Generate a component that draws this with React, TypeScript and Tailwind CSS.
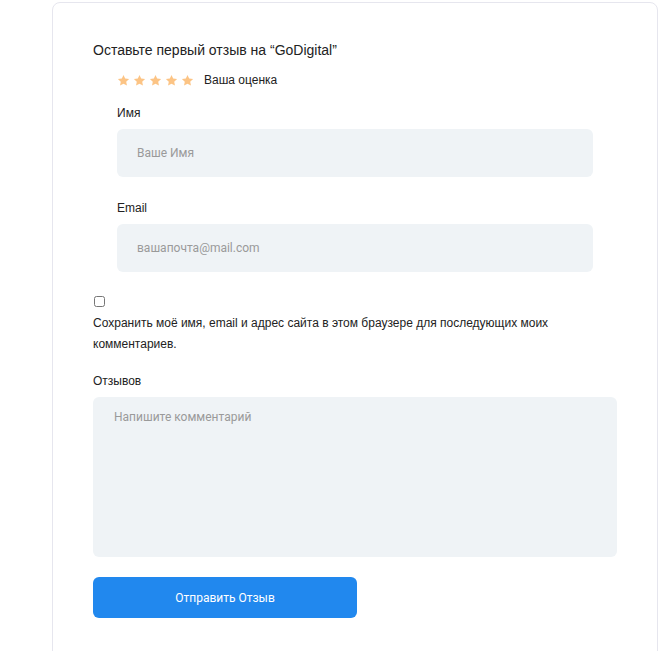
import React from 'react';

const Star: React.FC = () => (
    <svg viewBox="0 0 24 24" className="w-[13px] h-[13px]" fill="#fcc485">
        <path d="M12 1.8l3.1 6.6 7.2.9-5.3 5 1.4 7.1L12 17.9l-6.4 3.5 1.4-7.1-5.3-5 7.2-.9z" />
    </svg>
);

const App: React.FC = () => {
    return (
        <div className="min-h-screen bg-white font-['Liberation_Sans',Arial,sans-serif] text-[#222]">
            <div className="ml-[52px] mt-[2px] w-[606px] h-[660px] border border-[#e6e6ee] rounded-lg bg-white pl-[40px] pt-[37px]">
                <h3 className="text-[14px] leading-[20px] text-[#222]">Оставьте первый отзыв на “GoDigital”</h3>

                <div className="pl-[24px]">
                    {/* rating */}
                    <div className="flex items-center mt-[10px] h-[20px]">
                        <div className="flex gap-[3px]">
                            <Star />
                            <Star />
                            <Star />
                            <Star />
                            <Star />
                        </div>
                        <span className="ml-[10px] text-[12px] text-[#222]">Ваша оценка</span>
                    </div>

                    <label className="block mt-[15px] text-[12px] leading-[16px]">Имя</label>
                    <input
                        type="text"
                        placeholder="Ваше Имя"
                        className="mt-[8px] block w-[476px] h-[48px] rounded-md bg-[#eff3f6] px-[20px] text-[12px] font-['Roboto',sans-serif] placeholder:text-[#9a9a9a] focus:outline-none"
                    />

                    <label className="block mt-[23px] text-[12px] leading-[16px]">Email</label>
                    <input
                        type="text"
                        placeholder="вашапочта@mail.com"
                        className="mt-[8px] block w-[476px] h-[48px] rounded-md bg-[#eff3f6] px-[20px] text-[12px] font-['Roboto',sans-serif] placeholder:text-[#9a9a9a] focus:outline-none"
                    />
                </div>

                <input type="checkbox" className="block mt-[24px] ml-[1px] w-[11px] h-[11px]" />
                <p className="mt-[6px] w-[500px] text-[12px] leading-[21px] text-[#222]">
                    Сохранить моё имя, email и адрес сайта в этом браузере для последующих моих комментариев.
                </p>

                <label className="block mt-[18px] text-[12px] leading-[16px]">Отзывов</label>
                <textarea
                    placeholder="Напишите комментарий"
                    className="mt-[8px] block w-[524px] h-[160px] resize-none rounded-md bg-[#eff3f6] px-[21px] py-[11px] text-[12px] font-['Roboto',sans-serif] placeholder:text-[#9a9a9a] focus:outline-none"
                />

                <button className="mt-[20px] w-[264px] h-[41px] rounded-md bg-[#2188ee] text-white text-[12px] font-['Roboto',sans-serif]">
                    Отправить Отзыв
                </button>
            </div>
        </div>
    );
};

export default App;
